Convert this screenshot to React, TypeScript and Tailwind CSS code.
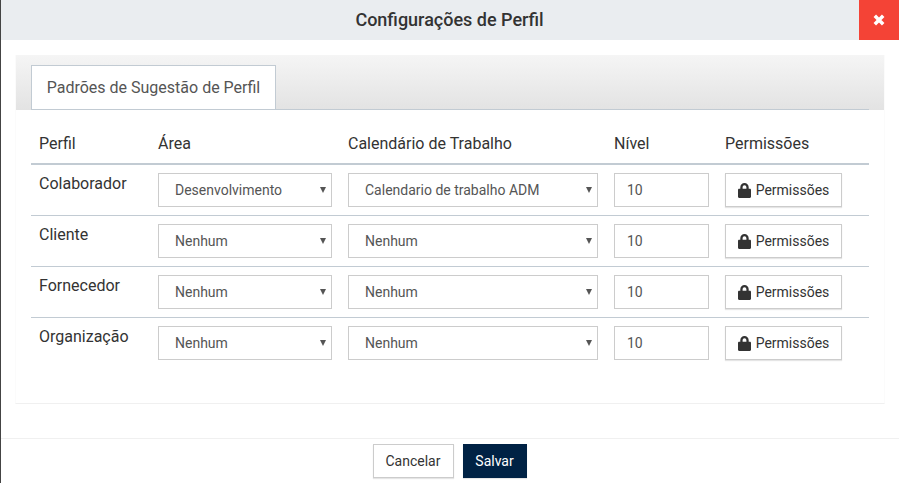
const rows = [
    { perfil: "Colaborador", area: "Desenvolvimento", calendario: "Calendario de trabalho ADM" },
    { perfil: "Cliente", area: "Nenhum", calendario: "Nenhum" },
    { perfil: "Fornecedor", area: "Nenhum", calendario: "Nenhum" },
    { perfil: "Organização", area: "Nenhum", calendario: "Nenhum" },
]

const LockIcon = () => (
    <svg viewBox="0 0 13 15" className="h-[15px] w-[13px] fill-[#333333]">
        <path d="M2.300 5.800V4.200C2.300 1.900 4.200 0 6.500 0s4.200 1.900 4.200 4.200v1.600h1.100c.7 0 1.200.5 1.200 1.200v6.700c0 .7-.5 1.200-1.200 1.200H1.200C.5 14.900 0 14.400 0 13.700V7c0-.7.5-1.200 1.200-1.200h1.100zm2.300 0h3.800V4.200c0-1-.9-1.900-1.900-1.900s-1.900.9-1.900 1.900v1.600z" />
    </svg>
)

const Select = ({ value, width }: { value: string; width: string }) => (
    <div className={`relative h-[34px] ${width}`}>
        <select
            defaultValue={value}
            className="h-full w-full appearance-none rounded-none border border-[#cccccc] bg-white pl-4 text-sm text-[#555555] outline-none"
        >
            <option>{value}</option>
        </select>
        <svg viewBox="0 0 6 6" className="pointer-events-none absolute top-[14px] right-[6px] h-[6px] w-[6px] fill-[#555555]">
            <path d="M0 0h6L3 6z" />
        </svg>
    </div>
)

export default function App() {
    return (
        <div className="flex h-[483px] w-[899px] flex-col overflow-hidden border-l border-l-[#444444] bg-white font-['Roboto',sans-serif] text-[#333333]">
            <div className="relative flex h-10 shrink-0 items-center justify-center bg-[#eaedf0] pr-px">
                <h1 className="text-lg font-medium text-[#333333]">Configurações de Perfil</h1>
                <button className="absolute top-0 right-0 flex h-10 w-10 items-center justify-center bg-[#f44336]">
                    <svg viewBox="0 0 12 12" className="h-3 w-3 fill-none stroke-white stroke-[3.5]">
                        <path d="M1.800 1.800l8.400 8.400M10.200 1.800l-8.400 8.400" />
                    </svg>
                </button>
            </div>

            <div className="mt-[15px] ml-[14px] h-[349px] w-[870px] shrink-0 border-x border-b border-x-[#fbfbfb] border-b-[#f0f0f0]">
                <div className="flex h-[55px] items-end bg-gradient-to-b from-[#f5f5f5] to-[#e3e3e3] px-[15px]">
                    <div className="flex grow items-end border-b border-b-[#c2cbd3]">
                        <div className="-mb-px flex h-[45px] w-[245px] items-center justify-center border border-[#c2cbd3] bg-white text-base text-[#555555]">
                            Padrões de Sugestão de Perfil
                        </div>
                    </div>
                </div>

                <div className="mx-[15px]">
                    <div className="grid h-[55px] grid-cols-[119px_190px_266px_111px_152px] items-end border-b-2 border-b-[#c2cbd3] pb-[9px] text-base leading-5 text-[#333333]">
                        <div className="pl-2">Perfil</div>
                        <div className="pl-2">Área</div>
                        <div className="pl-2">Calendário de Trabalho</div>
                        <div className="pl-2">Nível</div>
                        <div className="pl-2">Permissões</div>
                    </div>
                    {rows.map((row, index) => (
                        <div
                            key={row.perfil}
                            className={`grid h-[51px] grid-cols-[119px_190px_266px_111px_152px] pt-2 ${index < rows.length - 1 ? "border-b border-b-[#c2cbd3]" : ""}`}
                        >
                            <div className="pt-px pl-2 text-base leading-5">{row.perfil}</div>
                            <div className="pl-2">
                                <Select value={row.area} width="w-[174px]" />
                            </div>
                            <div className="pl-2">
                                <Select value={row.calendario} width="w-[250px]" />
                            </div>
                            <div className="pl-2">
                                <div className="flex h-[34px] w-[95px] items-center border border-[#cccccc] bg-white pl-3 text-sm text-[#555555]">
                                    10
                                </div>
                            </div>
                            <div className="pl-2">
                                <button className="flex h-[34px] w-[117px] items-center justify-center gap-[5px] border border-[#cccccc] bg-white text-sm text-[#333333] shadow-[0_1px_1px_rgba(0,0,0,0.1)]">
                                    <LockIcon />
                                    Permissões
                                </button>
                            </div>
                        </div>
                    ))}
                </div>
            </div>

            <div className="mt-[34px] flex grow items-start justify-center gap-[9px] border-t border-t-[#f0f0f0] pt-[5px] pr-px">
                <button className="h-[34px] w-[81px] border border-[#cccccc] bg-white text-sm text-[#333333] shadow-[0_1px_1px_rgba(0,0,0,0.1)]">
                    Cancelar
                </button>
                <button className="h-[34px] w-[64px] border border-[#002244] bg-[#002244] text-sm text-white shadow-[0_1px_1px_rgba(0,0,0,0.1)]">
                    Salvar
                </button>
            </div>
        </div>
    )
}
